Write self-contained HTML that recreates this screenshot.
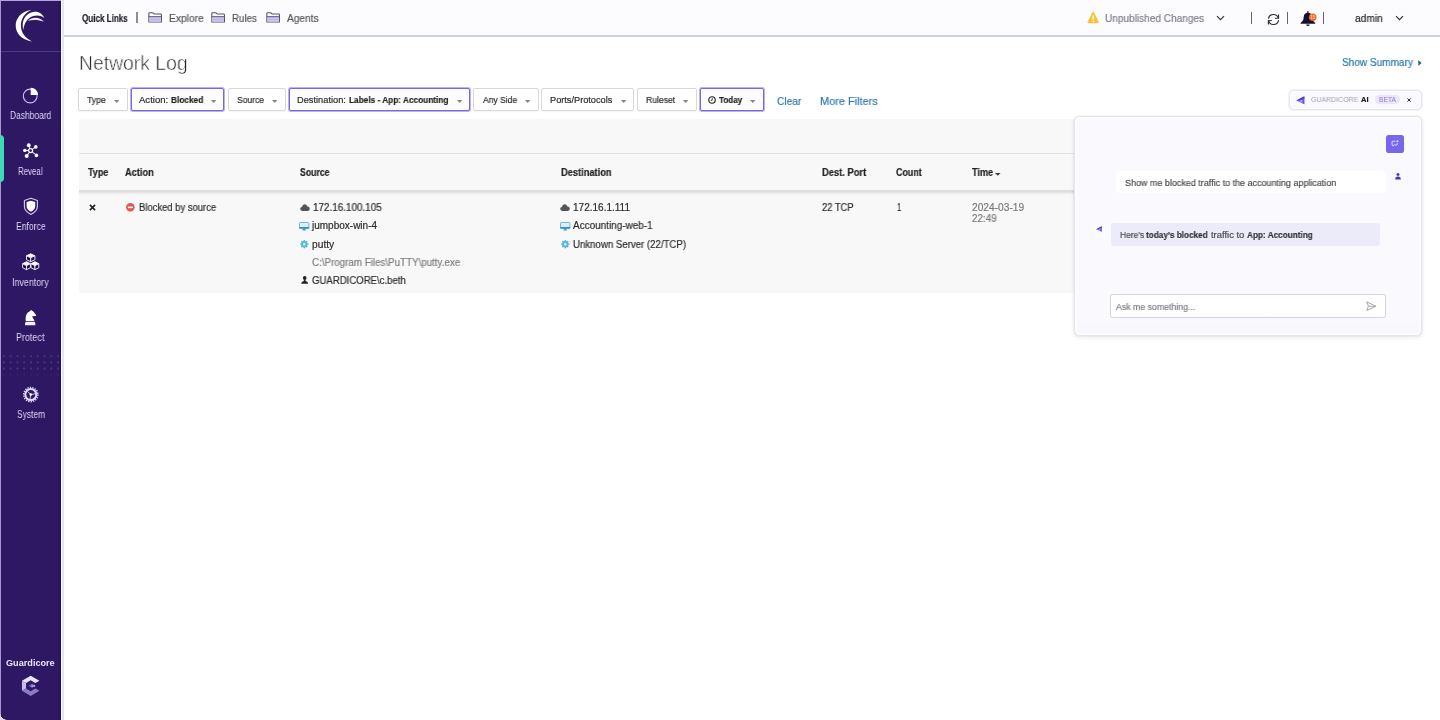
<!DOCTYPE html>
<html lang="en"><head><meta charset="utf-8"><title>Network Log</title>
<style>
html,body{margin:0;padding:0;}
body{width:1440px;height:720px;overflow:hidden;background:#fff;font-family:"Liberation Sans",sans-serif;position:relative;}
.t{position:absolute;white-space:nowrap;line-height:normal;-webkit-text-stroke:0.18px currentColor;transform-origin:0 50%;display:inline-block;will-change:transform;}
.abs{position:absolute;}
svg{position:absolute;overflow:visible;}
#sidebar{position:absolute;left:0;top:0;width:61px;height:720px;background:#2e1863;border-bottom-left-radius:5px;}
#sidebar-edge{position:absolute;left:62px;top:0;width:2px;height:720px;background:#e5e3fa;}
#topbar{position:absolute;left:64px;top:0;width:1376px;height:35px;background:#fcfcff;border-bottom:2px solid #cdd1e5;}
.fbtn{position:absolute;top:88px;height:21px;border:1px solid #d8d8d8;border-radius:2px;background:#fff;box-shadow:0 1px 1px rgba(0,0,0,.04);}
.fbtn.on{border:1px solid #7768dc;background:#fcfcff;box-shadow:0 0 0 1px rgba(119,104,220,.5);}
.caret{position:absolute;width:0;height:0;border-left:3px solid transparent;border-right:3px solid transparent;border-top:3px solid #777;}
#table{position:absolute;left:79px;top:119px;width:1343px;height:174px;background:#f8f8f8;}
#chat{position:absolute;left:1074px;top:116px;width:346px;height:218px;background:linear-gradient(#f9f9fe 0,#f9f9fe 92%,#f6f6fc 100%);border:1px solid #e4e4ee;border-radius:5.5px;box-shadow:inset 0 0 2px 2px rgba(255,255,255,.8),0 2px 5px rgba(0,0,0,.07),0 0 1.5px rgba(100,100,140,.28);}
</style></head><body>

<nav id="sidebar">
<div class="abs" style="left:59px;top:0;width:2px;height:720px;background:#251457"></div>
<div class="abs" style="left:0;top:0;width:61px;height:1px;background:#b3a4de"></div>
<div class="abs" style="left:0;top:0;width:1px;height:715px;background:#a797d3"></div>
<svg style="left:14px;top:8px" width="32" height="35" viewBox="0 0 32 35">
<path d="M17.4 1.7 C6.5 3.6 1.7 10.8 1.7 17.6 C1.7 25.4 7.4 31.8 17.8 33.4 C10.6 29.8 6.9 24.2 6.9 17.6 C6.9 11 10.2 5.4 17.4 1.7 Z" fill="#fff"/>
<path d="M9.3 21.9 C7.2 13 11 5.4 19.3 3.9 C24.6 3.1 28.6 6 30.3 10 C26.6 7.4 23 7.2 19.4 8.1 C13.4 9.8 10.4 15 9.3 21.9 Z" fill="#fff"/>
<path d="M13.8 12.8 C18 9 25.6 8.2 29.9 14.1 C25.6 11.9 19.6 11.6 13.8 12.8 Z" fill="#f1e8ff"/>
</svg>
<div class="abs" style="left:1px;top:50.5px;width:60px;height:1px;background:#4b3a85"></div>
<div class="abs" style="left:0;top:135px;width:4.2px;height:47px;background:#3fdab5;border-radius:0 4px 4px 0"></div>
<svg style="left:22px;top:87px" width="18" height="18" viewBox="0 0 18 18">
<circle cx="8.2" cy="9" r="6.9" fill="none" stroke="#cbbff2" stroke-width="1.15"/>
<path d="M8.7 0.8 A7.2 7.2 0 0 1 16.1 7.9 L8.7 7.9 Z" fill="#fff"/></svg>
<svg style="left:22px;top:143px" width="18" height="16" viewBox="0 0 18 16">
<g stroke="#e9e3fb" stroke-width="1.1" fill="none">
<line x1="8.6" y1="7.6" x2="6.75" y2="2.2"/><line x1="8.6" y1="7.6" x2="13.8" y2="3.9"/><line x1="8.6" y1="7.6" x2="14.5" y2="12.4"/><line x1="8.6" y1="7.6" x2="4.7" y2="13"/><line x1="8.6" y1="7.6" x2="2.8" y2="7.4"/>
</g>
<circle cx="8.6" cy="7.6" r="2" fill="#2e1863" stroke="#fff" stroke-width="1.2"/>
<g fill="#fff"><circle cx="6.75" cy="2.2" r="1.9"/><circle cx="13.8" cy="3.9" r="1.8"/><circle cx="14.5" cy="12.4" r="1.8"/><circle cx="4.7" cy="13" r="2"/><circle cx="2.8" cy="7.4" r="1.7"/></g></svg>
<svg style="left:23px;top:197px" width="16" height="19" viewBox="0 0 16 19">
<path d="M7.9 1.3 L14.4 3.5 L14.4 9.6 C14.4 13 11.5 15.6 7.9 17.5 C4.3 15.6 1.4 13 1.4 9.6 L1.4 3.5 Z" fill="none" stroke="#d2c7f6" stroke-width="1.15" stroke-linejoin="round"/>
<path d="M7.9 3.7 L12.2 5.1 L12.2 9.5 C12.2 11.8 10.3 13.5 7.9 14.8 C5.5 13.5 3.6 11.8 3.6 9.5 L3.6 5.1 Z" fill="#fff"/></svg>
<svg style="left:21px;top:252px" width="20" height="19" viewBox="0 0 20 19"><path d="M9.70 1.80 L13.90 3.80 L9.70 5.80 L5.50 3.80 Z" fill="#fff" stroke="#fff" stroke-width="0.9" stroke-linejoin="round"/><path d="M5.50 3.80 L9.70 5.80 L9.70 9.70 L5.50 7.70 Z" fill="#1d0f45" stroke="#f1ecfd" stroke-width="0.95" stroke-linejoin="round"/><path d="M13.90 3.80 L9.70 5.80 L9.70 9.70 L13.90 7.70 Z" fill="#1d0f45" stroke="#f1ecfd" stroke-width="0.95" stroke-linejoin="round"/><path d="M5.50 9.70 L9.40 11.70 L5.50 13.70 L1.60 11.70 Z" fill="#fff" stroke="#fff" stroke-width="0.9" stroke-linejoin="round"/><path d="M1.60 11.70 L5.50 13.70 L5.50 17.70 L1.60 15.70 Z" fill="#1d0f45" stroke="#f1ecfd" stroke-width="0.95" stroke-linejoin="round"/><path d="M9.40 11.70 L5.50 13.70 L5.50 17.70 L9.40 15.70 Z" fill="#1d0f45" stroke="#f1ecfd" stroke-width="0.95" stroke-linejoin="round"/><path d="M13.90 9.70 L17.80 11.70 L13.90 13.70 L10.00 11.70 Z" fill="#fff" stroke="#fff" stroke-width="0.9" stroke-linejoin="round"/><path d="M10.00 11.70 L13.90 13.70 L13.90 17.70 L10.00 15.70 Z" fill="#1d0f45" stroke="#f1ecfd" stroke-width="0.95" stroke-linejoin="round"/><path d="M17.80 11.70 L13.90 13.70 L13.90 17.70 L17.80 15.70 Z" fill="#1d0f45" stroke="#f1ecfd" stroke-width="0.95" stroke-linejoin="round"/></svg>
<svg style="left:23px;top:309px" width="15" height="17" viewBox="0 0 15 17">
<path d="M8 0.9 C9.6 1.6 11.2 3.2 11.8 4.4 L13.1 5.9 C13.3 6.5 12.7 7.1 12.1 7 L9.2 7.2 C9.4 8.8 10.8 10 11.6 12.2 L2.8 12.2 C2.2 7.5 3.4 3.6 6.8 2.2 Z" fill="#fff"/>
<path d="M2.6 13 L11.8 13 Q12.6 14.6 12.4 16.2 L2 16.2 Q1.8 14.6 2.6 13 Z" fill="#f4efff"/></svg>
<svg style="left:1px;top:355px" width="60" height="22" viewBox="0 0 60 22"><g fill="#483884"><circle cx="2.9" cy="1.2" r="1.05" opacity="1"/><circle cx="9.7" cy="1.2" r="1.05" opacity="1"/><circle cx="16.4" cy="1.2" r="1.05" opacity="1"/><circle cx="23.2" cy="1.2" r="1.05" opacity="1"/><circle cx="30.0" cy="1.2" r="1.05" opacity="1"/><circle cx="36.7" cy="1.2" r="1.05" opacity="1"/><circle cx="43.5" cy="1.2" r="1.05" opacity="1"/><circle cx="50.3" cy="1.2" r="1.05" opacity="1"/><circle cx="57.1" cy="1.2" r="1.05" opacity="1"/><circle cx="2.9" cy="7.4" r="1.05" opacity="1"/><circle cx="9.7" cy="7.4" r="1.05" opacity="1"/><circle cx="16.4" cy="7.4" r="1.05" opacity="1"/><circle cx="23.2" cy="7.4" r="1.05" opacity="1"/><circle cx="30.0" cy="7.4" r="1.05" opacity="1"/><circle cx="36.7" cy="7.4" r="1.05" opacity="1"/><circle cx="43.5" cy="7.4" r="1.05" opacity="1"/><circle cx="50.3" cy="7.4" r="1.05" opacity="1"/><circle cx="57.1" cy="7.4" r="1.05" opacity="1"/><circle cx="2.9" cy="13.6" r="1.05" opacity="1"/><circle cx="9.7" cy="13.6" r="1.05" opacity="1"/><circle cx="16.4" cy="13.6" r="1.05" opacity="1"/><circle cx="23.2" cy="13.6" r="1.05" opacity="1"/><circle cx="30.0" cy="13.6" r="1.05" opacity="1"/><circle cx="36.7" cy="13.6" r="1.05" opacity="1"/><circle cx="43.5" cy="13.6" r="1.05" opacity="1"/><circle cx="50.3" cy="13.6" r="1.05" opacity="1"/><circle cx="57.1" cy="13.6" r="1.05" opacity="1"/><circle cx="2.9" cy="19.8" r="1.05" opacity="0.35"/><circle cx="9.7" cy="19.8" r="1.05" opacity="0.35"/><circle cx="16.4" cy="19.8" r="1.05" opacity="0.35"/><circle cx="23.2" cy="19.8" r="1.05" opacity="0.35"/><circle cx="30.0" cy="19.8" r="1.05" opacity="0.35"/><circle cx="36.7" cy="19.8" r="1.05" opacity="0.35"/><circle cx="43.5" cy="19.8" r="1.05" opacity="0.35"/><circle cx="50.3" cy="19.8" r="1.05" opacity="0.35"/><circle cx="57.1" cy="19.8" r="1.05" opacity="0.35"/></g></svg>
<svg style="left:22px;top:385.5px" width="18" height="18" viewBox="0 0 18 18">
<circle cx="8.8" cy="8.6" r="7.1" fill="none" stroke="#d9d0f7" stroke-width="1.5" stroke-dasharray="1.35 1.13"/>
<circle cx="8.8" cy="8.6" r="5.5" fill="none" stroke="#e1daf9" stroke-width="2"/>
<path d="M8.8 8.6 L5.6 5.4 M8.8 8.6 L13 7.8 M8.8 8.6 L8 13" stroke="#cfc5f3" stroke-width="1"/>
<circle cx="8.8" cy="8.6" r="1.3" fill="#fff"/></svg>
<span class="t" id="t1" style="left:10.00px;top:110.00px;font-size:10px;color:#ddd4fa;transform:scaleX(0.8442);-webkit-text-stroke:0;">Dashboard</span>
<span class="t" id="t2" style="left:18.20px;top:165.50px;font-size:10px;color:#ddd4fa;transform:scaleX(0.7900);-webkit-text-stroke:0;">Reveal</span>
<span class="t" id="t3" style="left:15.80px;top:221.00px;font-size:10px;color:#ddd4fa;transform:scaleX(0.8587);-webkit-text-stroke:0;">Enforce</span>
<span class="t" id="t4" style="left:12.30px;top:276.50px;font-size:10px;color:#ddd4fa;transform:scaleX(0.8896);-webkit-text-stroke:0;">Inventory</span>
<span class="t" id="t5" style="left:16.40px;top:332.00px;font-size:10px;color:#ddd4fa;transform:scaleX(0.8931);-webkit-text-stroke:0;">Protect</span>
<span class="t" id="t6" style="left:16.60px;top:409.00px;font-size:10px;color:#ddd4fa;transform:scaleX(0.8397);-webkit-text-stroke:0;">System</span>
<span class="t" id="t7" style="left:6.30px;top:657.70px;font-size:9px;color:#e9e2ff;font-weight:700;transform:scaleX(1.0143);-webkit-text-stroke:0;">Guardicore</span>
<svg style="left:21px;top:674.6px" width="19.4" height="21.6" viewBox="0 0 20 22">
<path d="M1 5.8 L10 0.6 L19 5.8 L14.8 8.2 L10 5.4 L5.2 8.2 Z" fill="#ebe5fb"/>
<path d="M1 5.8 L5.2 8.2 L5.2 13.8 L1 16.2 Z" fill="#c6bbec"/>
<path d="M1 16.2 L5.2 13.8 L10 16.6 L14.8 13.8 L19 16.2 L10 21.4 Z" fill="#8c7cc5"/>
<path d="M7.4 11 L12.2 8.3 L12.2 13.7 Z" fill="#6a59ad"/>
<path d="M10.6 10 L14.6 10 L14.6 12.2 L10.6 12.2 Z" fill="#a99bd8"/>
</svg>
</nav>
<div id="sidebar-edge"></div>
<div class="abs" style="left:0;top:713px;width:7px;height:7px;background:radial-gradient(circle at 7px 0,transparent 6.5px,#ddd 7px);"></div>
<header>
<div id="topbar"></div>
<span class="t" id="t8" style="left:81.90px;top:12.90px;font-size:10px;color:#1e1e2a;font-weight:700;transform:scaleX(0.8079);">Quick Links</span>
<div class="abs" style="left:136.4px;top:12.3px;width:1.5px;height:11px;background:#8c8c94"></div>
<svg style="left:147.5px;top:12.3px" width="14.3" height="11" viewBox="0 0 15 12" preserveAspectRatio="none">
<path d="M0.9 11 L0.9 1.7 Q0.9 0.9 1.7 0.9 L5.2 0.9 L6.4 2.2 L13.3 2.2 Q14.1 2.2 14.1 3 L14.1 11 Z" fill="#fff" stroke="#55526e" stroke-width="1.15" stroke-linejoin="round"/>
<rect x="1.5" y="5.6" width="12" height="5" fill="#cbc4f0"/>
<line x1="0.9" y1="5.1" x2="14.1" y2="5.1" stroke="#5f5c7c" stroke-width="1.2"/>
<line x1="1.5" y1="8.2" x2="13.5" y2="8.2" stroke="#b9b1e6" stroke-width="0.8"/>
</svg>
<span class="t" id="t9" style="left:168.60px;top:11.70px;font-size:10.5px;color:#555;transform:scaleX(0.9773);">Explore</span>
<svg style="left:211.3px;top:12.3px" width="14.3" height="11" viewBox="0 0 15 12" preserveAspectRatio="none">
<path d="M0.9 11 L0.9 1.7 Q0.9 0.9 1.7 0.9 L5.2 0.9 L6.4 2.2 L13.3 2.2 Q14.1 2.2 14.1 3 L14.1 11 Z" fill="#fff" stroke="#55526e" stroke-width="1.15" stroke-linejoin="round"/>
<rect x="1.5" y="5.6" width="12" height="5" fill="#cbc4f0"/>
<line x1="0.9" y1="5.1" x2="14.1" y2="5.1" stroke="#5f5c7c" stroke-width="1.2"/>
<line x1="1.5" y1="8.2" x2="13.5" y2="8.2" stroke="#b9b1e6" stroke-width="0.8"/>
</svg>
<span class="t" id="t10" style="left:232.30px;top:11.70px;font-size:10.5px;color:#555;transform:scaleX(0.9271);">Rules</span>
<svg style="left:265.7px;top:12.3px" width="14.3" height="11" viewBox="0 0 15 12" preserveAspectRatio="none">
<path d="M0.9 11 L0.9 1.7 Q0.9 0.9 1.7 0.9 L5.2 0.9 L6.4 2.2 L13.3 2.2 Q14.1 2.2 14.1 3 L14.1 11 Z" fill="#fff" stroke="#55526e" stroke-width="1.15" stroke-linejoin="round"/>
<rect x="1.5" y="5.6" width="12" height="5" fill="#cbc4f0"/>
<line x1="0.9" y1="5.1" x2="14.1" y2="5.1" stroke="#5f5c7c" stroke-width="1.2"/>
<line x1="1.5" y1="8.2" x2="13.5" y2="8.2" stroke="#b9b1e6" stroke-width="0.8"/>
</svg>
<span class="t" id="t11" style="left:286.70px;top:11.70px;font-size:10.5px;color:#555;transform:scaleX(0.9663);">Agents</span>
<svg style="left:1086.8px;top:11.3px" width="12.3" height="12.9" viewBox="0 0 13 12.5" preserveAspectRatio="none">
<path d="M6.5 0.8 Q7.1 0.8 7.5 1.5 L12.3 10.4 Q12.8 11.8 11.4 11.9 L1.6 11.9 Q0.2 11.8 0.7 10.4 L5.5 1.5 Q5.9 0.8 6.5 0.8 Z" fill="#f8c338"/>
<rect x="5.9" y="4" width="1.3" height="4.4" rx="0.6" fill="#fff"/><circle cx="6.55" cy="9.9" r="0.8" fill="#fff"/></svg>
<span class="t" id="t12" style="left:1105.30px;top:11.70px;font-size:10.5px;color:#7c7c89;transform:scaleX(0.9591);">Unpublished Changes</span>
<svg style="left:1216px;top:15px" width="9" height="6" viewBox="0 0 9 6"><path d="M1 1.2 L4.5 4.7 L8 1.2" fill="none" stroke="#333" stroke-width="1.2"/></svg>
<div class="abs" style="left:1251.0px;top:12px;width:1.2px;height:11.7px;background:#66666e"></div>
<div class="abs" style="left:1287.0px;top:12px;width:1.2px;height:11.7px;background:#66666e"></div>
<div class="abs" style="left:1322.8px;top:12px;width:1.2px;height:11.7px;background:#66666e"></div>
<svg style="left:1267px;top:13px" width="13" height="13" viewBox="0 0 13 13">
<g fill="none" stroke="#2c2c2c" stroke-width="1.15" stroke-linecap="round" stroke-linejoin="round">
<path d="M1.55 5.3 A5.1 5.1 0 0 1 11.3 4.9"/><path d="M11.5 1.8 L11.6 5.2 L8.5 5.3"/>
<path d="M11.5 7.6 A5.1 5.1 0 0 1 1.65 7.9"/><path d="M1.4 11 L1.3 7.7 L4.4 7.5"/></g></svg>
<svg style="left:1300.2px;top:10px" width="17" height="17" viewBox="0 0 17 17">
<rect x="7.1" y="1.1" width="1.6" height="2.2" rx="0.5" fill="#4b4a58"/>
<path d="M7.9 2.7 C5 2.7 3.9 4.6 3.7 7 C3.5 9.6 3.2 11 0.5 12.9 L0.5 13.8 L15.3 13.8 L15.3 12.9 C12.6 11 12.3 9.6 12.1 7 C11.9 4.6 10.8 2.7 7.9 2.7 Z" fill="#15102f"/>
<path d="M6.1 14.5 L9.7 14.5 Q9.5 16.1 7.9 16.1 Q6.3 16.1 6.1 14.5 Z" fill="#15102f"/>
<circle cx="12.7" cy="7.2" r="3.8" fill="#f2652a"/>
<text x="12.7" y="8.8" font-size="4.6" font-weight="700" fill="#ffc9a8" text-anchor="middle" font-family="Liberation Sans, sans-serif">15</text>
</svg>
<span class="t" id="t13" style="left:1355.20px;top:11.70px;font-size:10.5px;color:#222;transform:scaleX(0.9717);">admin</span>
<svg style="left:1394.5px;top:15px" width="9" height="6" viewBox="0 0 9 6"><path d="M1 1.2 L4.5 4.7 L8 1.2" fill="none" stroke="#333" stroke-width="1.2"/></svg>
</header>
<main>
<span class="t" id="t14" style="left:78.60px;top:51.00px;font-size:21px;color:#1c1c1c;transform:scaleX(0.9212);-webkit-text-stroke:0.6px #fff;">Network Log</span>
<span class="t" id="t15" style="left:1342.30px;top:56.30px;font-size:11px;color:#2677ad;transform:scaleX(0.9132);">Show Summary</span>
<svg style="left:1417.5px;top:59.8px" width="4" height="6" viewBox="0 0 4 6"><path d="M0.3 0 L3.6 3 L0.3 6 Z" fill="#1f6496"/></svg>
<div class="fbtn" style="left:78px;width:48px"></div>
<span class="t" id="t16" style="left:86.80px;top:95.40px;font-size:9.2px;color:#2a2a2a;transform:scaleX(0.9437);">Type</span>
<svg style="left:113.8px;top:100px" width="5.4" height="2.9" viewBox="0 0 5.8 2.9" preserveAspectRatio="none"><path d="M0 0 L5.8 0 L2.9 2.9 Z" fill="#858585"/></svg>
<div class="fbtn on" style="left:131px;width:91px"></div>
<span class="t" id="t17" style="left:139.00px;top:95.40px;font-size:9.2px;color:#2a2a2a;transform:scaleX(1.0394);">Action:</span>
<span class="t" id="t18" style="left:171.00px;top:95.40px;font-size:9.2px;color:#222;font-weight:700;transform:scaleX(0.9007);">Blocked</span>
<svg style="left:210.7px;top:100px" width="5.4" height="2.9" viewBox="0 0 5.8 2.9" preserveAspectRatio="none"><path d="M0 0 L5.8 0 L2.9 2.9 Z" fill="#858585"/></svg>
<div class="fbtn" style="left:228px;width:56px"></div>
<span class="t" id="t19" style="left:236.50px;top:95.40px;font-size:9.2px;color:#2a2a2a;transform:scaleX(0.9270);">Source</span>
<svg style="left:271.6px;top:100px" width="5.4" height="2.9" viewBox="0 0 5.8 2.9" preserveAspectRatio="none"><path d="M0 0 L5.8 0 L2.9 2.9 Z" fill="#858585"/></svg>
<div class="fbtn on" style="left:289px;width:179px"></div>
<span class="t" id="t20" style="left:297.30px;top:95.40px;font-size:9.2px;color:#2a2a2a;transform:scaleX(1.0076);">Destination:</span>
<span class="t" id="t21" style="left:349.40px;top:95.40px;font-size:9.2px;color:#222;font-weight:700;transform:scaleX(0.8988);">Labels - App: Accounting</span>
<svg style="left:457.1px;top:100px" width="5.4" height="2.9" viewBox="0 0 5.8 2.9" preserveAspectRatio="none"><path d="M0 0 L5.8 0 L2.9 2.9 Z" fill="#858585"/></svg>
<div class="fbtn" style="left:473px;width:64px"></div>
<span class="t" id="t22" style="left:482.50px;top:95.40px;font-size:9.2px;color:#2a2a2a;transform:scaleX(0.9271);">Any Side</span>
<svg style="left:524.9px;top:100px" width="5.4" height="2.9" viewBox="0 0 5.8 2.9" preserveAspectRatio="none"><path d="M0 0 L5.8 0 L2.9 2.9 Z" fill="#858585"/></svg>
<div class="fbtn" style="left:541px;width:91px"></div>
<span class="t" id="t23" style="left:550.20px;top:95.40px;font-size:9.2px;color:#2a2a2a;transform:scaleX(1.0001);">Ports/Protocols</span>
<svg style="left:620.7px;top:100px" width="5.4" height="2.9" viewBox="0 0 5.8 2.9" preserveAspectRatio="none"><path d="M0 0 L5.8 0 L2.9 2.9 Z" fill="#858585"/></svg>
<div class="fbtn" style="left:637px;width:58px"></div>
<span class="t" id="t24" style="left:645.80px;top:95.40px;font-size:9.2px;color:#2a2a2a;transform:scaleX(0.9372);">Ruleset</span>
<svg style="left:683.4px;top:100px" width="5.4" height="2.9" viewBox="0 0 5.8 2.9" preserveAspectRatio="none"><path d="M0 0 L5.8 0 L2.9 2.9 Z" fill="#858585"/></svg>
<div class="fbtn on" style="left:700px;width:62px"></div>
<svg style="left:708px;top:96.3px" width="8" height="8" viewBox="0 0 8 8"><circle cx="4" cy="4" r="3.25" fill="none" stroke="#1f1f1f" stroke-width="1.15"/><path d="M4.3 2.1 L4.1 4.3 L2.9 4.4" fill="none" stroke="#1f1f1f" stroke-width="0.85"/></svg>
<span class="t" id="t25" style="left:718.80px;top:95.40px;font-size:9.2px;color:#222;font-weight:700;transform:scaleX(0.8796);">Today</span>
<svg style="left:750.2px;top:100px" width="5.4" height="2.9" viewBox="0 0 5.8 2.9" preserveAspectRatio="none"><path d="M0 0 L5.8 0 L2.9 2.9 Z" fill="#858585"/></svg>
<span class="t" id="t26" style="left:777.00px;top:95.00px;font-size:11.3px;color:#2b78ac;transform:scaleX(0.9000);">Clear</span>
<span class="t" id="t27" style="left:820.30px;top:95.00px;font-size:11.3px;color:#2b78ac;transform:scaleX(0.9675);">More Filters</span>
<div id="table">
<div class="abs" style="left:0;top:33.5px;width:100%;height:1px;background:#e2e2e2"></div>
<div class="abs" style="left:0;top:71px;width:100%;height:5px;background:linear-gradient(#e3e3e3 0,#dadada 22%,#dedede 40%,#ececec 62%,#f8f8f8 100%)"></div>
</div>
<span class="t" id="t28" style="left:88.00px;top:167.00px;font-size:10px;color:#222;font-weight:700;transform:scaleX(0.8979);">Type</span>
<span class="t" id="t29" style="left:125.30px;top:167.00px;font-size:10px;color:#222;font-weight:700;transform:scaleX(0.9226);">Action</span>
<span class="t" id="t30" style="left:299.70px;top:167.00px;font-size:10px;color:#222;font-weight:700;transform:scaleX(0.8700);">Source</span>
<span class="t" id="t31" style="left:560.70px;top:167.00px;font-size:10px;color:#222;font-weight:700;transform:scaleX(0.9292);">Destination</span>
<span class="t" id="t32" style="left:821.60px;top:167.00px;font-size:10px;color:#222;font-weight:700;transform:scaleX(0.9336);">Dest. Port</span>
<span class="t" id="t33" style="left:896.30px;top:167.00px;font-size:10px;color:#222;font-weight:700;transform:scaleX(0.8896);">Count</span>
<span class="t" id="t34" style="left:971.60px;top:167.00px;font-size:10px;color:#222;font-weight:700;transform:scaleX(0.9149);">Time</span>
<svg style="left:995.2px;top:172.9px" width="5.6" height="2.8" viewBox="0 0 5.6 2.8"><path d="M0 0 L5.6 0 L2.8 2.8 Z" fill="#3a3a3a"/></svg>
<svg style="left:89px;top:204px" width="7" height="7" viewBox="0 0 7 7"><path d="M0.9 0.9 L6.1 6.1 M6.1 0.9 L0.9 6.1" stroke="#222" stroke-width="1.6"/></svg>
<svg style="left:125.5px;top:203px" width="8.7" height="8.7" viewBox="0 0 9.2 9.2"><circle cx="4.6" cy="4.6" r="4.5" fill="#e5554f"/><rect x="2" y="3.8" width="5.2" height="1.7" fill="#fff"/></svg>
<span class="t" id="t35" style="left:139.20px;top:202.00px;font-size:10px;color:#2b2b2b;transform:scaleX(0.9435);">Blocked by source</span>
<svg style="left:299.5px;top:203.8px" width="10" height="7" viewBox="0 0 10 6.4" preserveAspectRatio="none"><path d="M2.3 6.3 Q0.2 6.2 0.2 4.4 Q0.3 2.9 1.9 2.7 Q2.3 0.2 4.7 0.2 Q6.5 0.2 7.2 2 Q9.8 2.1 9.8 4.3 Q9.8 6.2 7.9 6.3 Z" fill="#555"/></svg>
<span class="t" id="t36" style="left:312.60px;top:202.00px;font-size:10px;color:#2b2b2b;transform:scaleX(0.9883);">172.16.100.105</span>
<svg style="left:299.3px;top:222.1px" width="10.4" height="8.6" viewBox="0 0 10.4 8.6"><rect x="0.5" y="0.5" width="9.4" height="6" rx="0.7" fill="#dceffa" stroke="#62b0de" stroke-width="0.9"/><rect x="0.3" y="5" width="9.8" height="1.6" fill="#3291cd"/><path d="M3.4 8.4 L7 8.4 L6.3 6.6 L4.1 6.6 Z" fill="#3d9ad3"/></svg>
<span class="t" id="t37" style="left:312.00px;top:220.20px;font-size:10px;color:#2b2b2b;transform:scaleX(0.9995);">jumpbox-win-4</span>
<svg style="left:300.1px;top:239.8px" width="8.6" height="8.4" viewBox="0 0 8.6 8.4"><g stroke="#5ab9d9" stroke-width="1.55"><line x1="6.70" y1="4.20" x2="8.45" y2="4.20"/><line x1="6.00" y1="5.90" x2="7.23" y2="7.13"/><line x1="4.30" y1="6.60" x2="4.30" y2="8.35"/><line x1="2.60" y1="5.90" x2="1.37" y2="7.13"/><line x1="1.90" y1="4.20" x2="0.15" y2="4.20"/><line x1="2.60" y1="2.50" x2="1.37" y2="1.27"/><line x1="4.30" y1="1.80" x2="4.30" y2="0.05"/><line x1="6.00" y1="2.50" x2="7.23" y2="1.27"/></g><circle cx="4.3" cy="4.2" r="2.2" fill="#d9f0f8" stroke="#5ab9d9" stroke-width="1.9"/></svg>
<span class="t" id="t38" style="left:312.20px;top:238.50px;font-size:10px;color:#2b2b2b;transform:scaleX(1.0236);">putty</span>
<span class="t" id="t39" style="left:312.00px;top:256.80px;font-size:10px;color:#7e7e7e;transform:scaleX(0.9780);">C:\Program Files\PuTTY\putty.exe</span>
<svg style="left:301.0px;top:276.2px" width="7.4" height="8" viewBox="0 0 7.4 7.4" preserveAspectRatio="none"><circle cx="3.7" cy="1.9" r="1.8" fill="#222"/><path d="M3 3.2 L4.4 3.2 L4.6 4.6 Q7.2 5 7.2 7.2 L0.2 7.2 Q0.2 5 2.8 4.6 Z" fill="#222"/></svg>
<span class="t" id="t40" style="left:312.20px;top:274.70px;font-size:10px;color:#2b2b2b;transform:scaleX(0.9590);">GUARDICORE\c.beth</span>
<svg style="left:560.3px;top:203.8px" width="10" height="7" viewBox="0 0 10 6.4" preserveAspectRatio="none"><path d="M2.3 6.3 Q0.2 6.2 0.2 4.4 Q0.3 2.9 1.9 2.7 Q2.3 0.2 4.7 0.2 Q6.5 0.2 7.2 2 Q9.8 2.1 9.8 4.3 Q9.8 6.2 7.9 6.3 Z" fill="#555"/></svg>
<span class="t" id="t41" style="left:573.30px;top:202.00px;font-size:10px;color:#2b2b2b;transform:scaleX(1.0016);">172.16.1.111</span>
<svg style="left:560.3px;top:222.1px" width="10.4" height="8.6" viewBox="0 0 10.4 8.6"><rect x="0.5" y="0.5" width="9.4" height="6" rx="0.7" fill="#dceffa" stroke="#62b0de" stroke-width="0.9"/><rect x="0.3" y="5" width="9.8" height="1.6" fill="#3291cd"/><path d="M3.4 8.4 L7 8.4 L6.3 6.6 L4.1 6.6 Z" fill="#3d9ad3"/></svg>
<span class="t" id="t42" style="left:572.80px;top:220.20px;font-size:10px;color:#2b2b2b;transform:scaleX(0.9944);">Accounting-web-1</span>
<svg style="left:560.9px;top:239.8px" width="8.6" height="8.4" viewBox="0 0 8.6 8.4"><g stroke="#5ab9d9" stroke-width="1.55"><line x1="6.70" y1="4.20" x2="8.45" y2="4.20"/><line x1="6.00" y1="5.90" x2="7.23" y2="7.13"/><line x1="4.30" y1="6.60" x2="4.30" y2="8.35"/><line x1="2.60" y1="5.90" x2="1.37" y2="7.13"/><line x1="1.90" y1="4.20" x2="0.15" y2="4.20"/><line x1="2.60" y1="2.50" x2="1.37" y2="1.27"/><line x1="4.30" y1="1.80" x2="4.30" y2="0.05"/><line x1="6.00" y1="2.50" x2="7.23" y2="1.27"/></g><circle cx="4.3" cy="4.2" r="2.2" fill="#d9f0f8" stroke="#5ab9d9" stroke-width="1.9"/></svg>
<span class="t" id="t43" style="left:573.00px;top:238.50px;font-size:10px;color:#2b2b2b;transform:scaleX(0.9636);">Unknown Server (22/TCP)</span>
<span class="t" id="t44" style="left:821.60px;top:202.00px;font-size:10px;color:#2b2b2b;transform:scaleX(0.9367);">22 TCP</span>
<span class="t" id="t45" style="left:897.00px;top:202.00px;font-size:10px;color:#2b2b2b;transform:scaleX(0.7730);">1</span>
<span class="t" id="t46" style="left:971.60px;top:202.00px;font-size:10px;color:#7a7a7a;transform:scaleX(1.0204);">2024-03-19</span>
<span class="t" id="t47" style="left:971.60px;top:213.00px;font-size:10px;color:#7a7a7a;transform:scaleX(0.9828);">22:49</span>
</main>
<aside>
<div class="abs" style="left:1289px;top:90px;width:131px;height:18px;background:#f9f9ff;border:1px solid #e6e6ee;border-radius:5px;box-shadow:0 0 0 1px rgba(236,236,243,.75),inset 0 0 0 1px rgba(255,255,255,.9)"></div>
<svg style="left:1296.0px;top:95.8px" width="8.6" height="8.6" viewBox="0 0 8.6 8.6"><path d="M0.3 4.6 L8.3 0.3 L8.3 8.3 Z" fill="#7f70ec"/><path d="M0.3 4.6 L8.3 0.3 L8.3 2.6 L5 4.6 Z" fill="#4737bd"/><path d="M6.6 2.4 L8.3 1.4 L8.3 8.3 L6.6 7.2 Z" fill="#6656da"/><path d="M3.4 4.7 L6.2 3.4 L6.2 6 Z" fill="#b9b0f7"/></svg>
<span class="t" id="t48" style="left:1310.70px;top:95.30px;font-size:7.2px;color:#a2a2ad;transform:scaleX(0.9706);-webkit-text-stroke:0;">GUARDICORE</span>
<span class="t" id="t49" style="left:1360.70px;top:95.30px;font-size:7.4px;color:#222;font-weight:700;transform:scaleX(1.0127);">AI</span>
<div class="abs" style="left:1375px;top:95.3px;width:25px;height:9.2px;background:#ebe4fa;border-radius:4.6px"></div>
<span class="t" id="t50" style="left:1378.80px;top:96.40px;font-size:6.6px;color:#8f7fc6;transform:scaleX(1.0159);-webkit-text-stroke:0;">BETA</span>
<svg style="left:1407.3px;top:98.4px" width="4.2" height="4.2" viewBox="0 0 4.2 4.2"><path d="M0.5 0.5 L3.7 3.7 M3.7 0.5 L0.5 3.7" stroke="#222" stroke-width="1"/></svg>
<div id="chat"></div>
<div class="abs" style="left:1386px;top:135px;width:18px;height:18.2px;background:#7867ea;border-radius:2.8px"></div>
<svg style="left:1390.8px;top:140.4px" width="8" height="7.2" viewBox="0 0 9 9" preserveAspectRatio="none"><path d="M5 1.6 L1.8 1.6 Q1.2 1.6 1.2 2.2 L1.2 5.6 Q1.2 6.2 1.8 6.2 L2.2 6.2 L2.2 7.6 L3.6 6.2 L6.4 6.2 Q7 6.2 7 5.6 L7 4" fill="none" stroke="#efecff" stroke-width="1"/><path d="M7.2 0.4 L7.2 2.8 M6 1.6 L8.4 1.6" stroke="#efecff" stroke-width="0.9"/></svg>
<div class="abs" style="left:1116px;top:171px;width:270px;height:22px;background:#fff;border-radius:3px"></div>
<span class="t" id="t51" style="left:1125.00px;top:178.00px;font-size:9.2px;color:#4a4a4a;transform:scaleX(0.9765);">Show me blocked traffic to the accounting application</span>
<svg style="left:1394.8px;top:173px" width="6" height="6.6" viewBox="0 0 6 6.6"><circle cx="3" cy="1.6" r="1.5" fill="#4534b8"/><path d="M0.2 6.5 Q0.2 3.6 3 3.6 Q5.8 3.6 5.8 6.5 Z" fill="#4534b8"/></svg>
<div class="abs" style="left:1110.5px;top:223px;width:269.5px;height:22.6px;background:#ecebfa;border-radius:3px"></div>
<div class="abs" style="left:1092.5px;top:223.2px;width:12px;height:12px;background:#fbfbff;border-radius:6px"></div>
<svg style="left:1095.5px;top:226.1px" width="5.9" height="5.9" viewBox="0 0 8.6 8.6"><path d="M0.3 4.6 L8.3 0.3 L8.3 8.3 Z" fill="#7f70ec"/><path d="M0.3 4.6 L8.3 0.3 L8.3 2.6 L5 4.6 Z" fill="#4737bd"/><path d="M6.6 2.4 L8.3 1.4 L8.3 8.3 L6.6 7.2 Z" fill="#6656da"/><path d="M3.4 4.7 L6.2 3.4 L6.2 6 Z" fill="#b9b0f7"/></svg>
<span class="t" id="t52" style="left:1119.80px;top:230.00px;font-size:9.2px;color:#4a4a4a;transform:scaleX(0.9170);">Here&#8217;s</span>
<span class="t" id="t53" style="left:1146.30px;top:230.00px;font-size:9.2px;color:#333;font-weight:700;transform:scaleX(0.8928);">today&#8217;s blocked</span>
<span class="t" id="t54" style="left:1210.50px;top:230.00px;font-size:9.2px;color:#4a4a4a;transform:scaleX(1.0241);">traffic to</span>
<span class="t" id="t55" style="left:1246.70px;top:230.00px;font-size:9.2px;color:#333;font-weight:700;transform:scaleX(0.8931);">App: Accounting</span>
<div class="abs" style="left:1110px;top:294px;width:274px;height:22px;background:#fff;border:1px solid #d0d0ec;border-radius:2.5px"></div>
<span class="t" id="t56" style="left:1116.20px;top:302.00px;font-size:9.2px;color:#7c7c8a;transform:scaleX(0.9527);">Ask me something...</span>
<svg style="left:1365.5px;top:300.8px" width="10.6" height="10.4" viewBox="0 0 10.6 10.4"><path d="M0.8 0.9 L9.8 5.2 L0.8 9.5 L2.4 5.2 Z M2.4 5.2 L9.8 5.2" fill="none" stroke="#9a9aa4" stroke-width="0.9" stroke-linejoin="round"/></svg>
</aside>
</body></html>
